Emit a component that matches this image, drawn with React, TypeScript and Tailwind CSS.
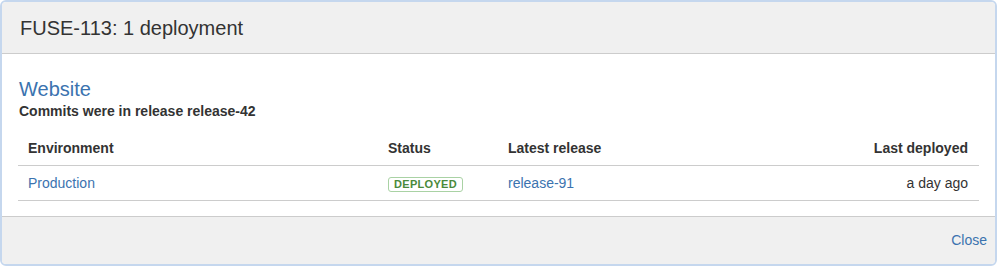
import React from "react";

const rows = [
  { env: "Production", status: "DEPLOYED", release: "release-91", when: "a day ago" },
];

export default function App() {
  return (
    <div className="w-[997px] h-[266px] bg-white font-['Liberation_Sans',Arial,sans-serif] text-[#333]">
      <div className="flex h-full flex-col overflow-hidden rounded-[6px] border-2 border-[#c5d7ee]">
        <div className="flex h-[52px] items-center border-b border-[#cccccc] bg-[#f0f0f0] pl-[18px]">
          <h2 className="text-[20px] leading-6 text-[#333]">FUSE-113: 1 deployment</h2>
        </div>

        <div className="flex-1 bg-white px-4 pt-[23px]">
          <div className="pl-[1px] text-[20px] leading-6 text-[#3b73af]">Website</div>
          <div className="mt-[2px] pl-[1px] text-[14px] font-bold leading-4 text-[#333]">
            Commits were in release release-42
          </div>

          <table className="mt-[11px] w-full border-collapse text-[14px]">
            <thead>
              <tr className="border-b border-[#cccccc]">
                <th className="w-[360px] px-2.5 pt-[10px] pb-[8px] text-left font-bold leading-[17px]">Environment</th>
                <th className="w-[120px] px-2.5 pt-[10px] pb-[8px] text-left font-bold leading-[17px]">Status</th>
                <th className="px-2.5 pt-[10px] pb-[8px] text-left font-bold leading-[17px]">Latest release</th>
                <th className="px-2.5 pt-[10px] pb-[8px] pr-[11px] text-right font-bold leading-[17px]">Last deployed</th>
              </tr>
            </thead>
            <tbody>
              {rows.map((r) => (
                <tr key={r.env} className="border-b border-[#cccccc]">
                  <td className="px-2.5 pt-[9px] pb-[8px] leading-[17px] text-[#3b73af]">{r.env}</td>
                  <td className="px-2.5 pt-[9px] pb-[8px] leading-[17px]">
                    <span className="inline-block rounded-[3px] border border-[#a9d2a4] px-[5px] text-[11px] font-bold leading-[13px] tracking-[0.3px] text-[#4a8a3b]">
                      {r.status}
                    </span>
                  </td>
                  <td className="px-2.5 pt-[9px] pb-[8px] leading-[17px] text-[#3b73af]">{r.release}</td>
                  <td className="px-2.5 pt-[9px] pb-[8px] pr-[11px] text-right leading-[17px] text-[#333]">{r.when}</td>
                </tr>
              ))}
            </tbody>
          </table>
        </div>

        <div className="flex h-[48px] items-center justify-end border-t border-[#cccccc] bg-[#f0f0f0] pr-2">
          <a className="text-[14px] text-[#3b73af]">Close</a>
        </div>
      </div>
    </div>
  );
}
